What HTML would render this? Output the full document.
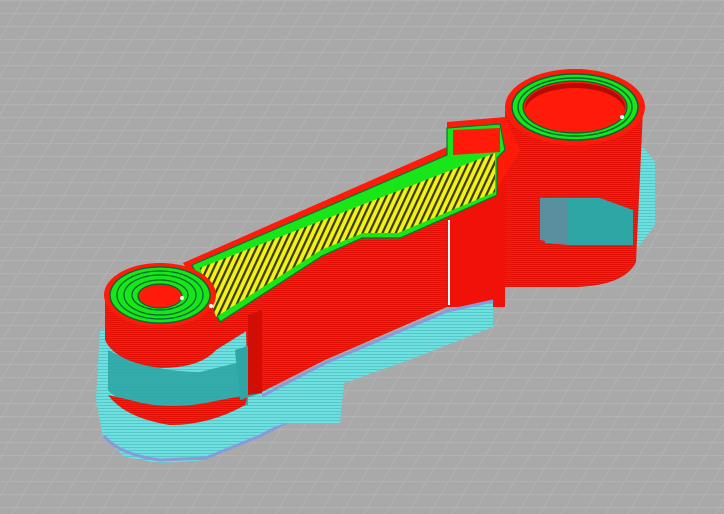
<!DOCTYPE html>
<html><head><meta charset="utf-8"><style>
html,body{margin:0;padding:0;background:#a8a8a8;width:724px;height:514px;overflow:hidden}
</style></head><body>
<svg width="724" height="514" viewBox="0 0 724 514" xmlns="http://www.w3.org/2000/svg">
<defs>
<pattern id="grid" width="22" height="13" patternUnits="userSpaceOnUse" patternTransform="skewX(-30)">
<rect width="22" height="13" fill="#a9a9a9"/>
<path d="M0 0.5H22M0.5 0V13" stroke="#b3b3b3" stroke-width="1"/>
</pattern>
<pattern id="yel" width="6" height="6" patternUnits="userSpaceOnUse" patternTransform="rotate(25)">
<rect width="6" height="6" fill="#f2f21a"/>
<rect width="2.2" height="6" fill="#3a3a00"/>
</pattern>
<pattern id="cy" width="4" height="3" patternUnits="userSpaceOnUse">
<rect width="4" height="3" fill="#6fe0e0"/>
<rect width="4" height="1" fill="#56c6c8"/>
</pattern>
<pattern id="rd" width="4" height="2" patternUnits="userSpaceOnUse">
<rect width="4" height="2" fill="#ff1a0a"/>
<rect width="4" height="0.7" fill="#d80c04"/>
</pattern>
</defs>
<rect width="724" height="514" fill="url(#grid)"/>

<!-- cyan base left -->
<path d="M100 330 L96 400 L103 437 L125 457 L160 463 L206 460 L260 437 L287 423 L290 395 L262 380 L248 330 L200 318 Z" fill="url(#cy)"/>
<path d="M104 436 Q120 455 160 460 L206 458 L260 436 L287 422" fill="none" stroke="#8a9ad8" stroke-width="3"/>
<!-- dark teal band left -->
<path d="M108 350 Q150 372 200 372 L248 360 L248 405 Q200 418 150 410 Q115 400 108 390 Z" fill="#2fa6a6" opacity="0.9"/>
<!-- cyan right -->
<path d="M610 140 L640 143 L655 162 L655 225 L640 245 L625 255 L545 250 L540 195 L600 185 Z" fill="url(#cy)"/>
<path d="M540 196 Q600 185 640 170" fill="none" stroke="#8a9ad8" stroke-width="3"/>

<!-- red right cylinder side -->
<path d="M505 110 L505 287 L577 287 Q625 285 636 262 L643 110 Z" fill="url(#rd)"/>
<path d="M540 198 L600 198 L633 210 L633 245 L570 245 L545 243 Z" fill="#2fa6a6"/>
<path d="M540 198 L568 200 L568 245 L540 240 Z" fill="#5a8fa0"/>
<!-- red main mid face -->
<path d="M245 300 L447 147 L447 307 L325 360 L260 393 L248 395 Z" fill="url(#rd)"/>
<path d="M447 147 L505 130 L505 307 L447 307 Z" fill="#f01208"/>
<!-- cyan ledge under mid -->
<path d="M262 395 L325 362 L447 310 L493 300 L493 327 L409 360 L344 383 L340 423 L287 423 L262 430 Z" fill="url(#cy)"/>
<path d="M262 396 L325 363 L447 311 L493 301" fill="none" stroke="#8a9ad8" stroke-width="3"/>
<!-- left cylinder side -->
<path d="M105 295 L105 340 Q115 362 160 368 Q200 368 216 350 L248 330 L248 300 L216 295 Z" fill="url(#rd)"/>
<path d="M108 395 Q125 418 170 425 Q210 425 245 405 L248 395 L220 400 Q170 412 130 400 Z" fill="url(#rd)"/>
<path d="M235 350 L260 342 L262 393 L240 400 Z" fill="#2fa6a6"/>
<path d="M248 315 L262 310 L262 393 L248 395 Z" fill="#d00e04"/>

<!-- top surface -->
<path d="M183 263 L447 147 L447 122 L505 117 L520 150 L495 192 L398 233 L363 233 L321 252 L216 317 Z" fill="#ff1a0a"/>
<path d="M192 265 L447 155 L447 128 L500 124 L505 150 L497 158 L497 195 L400 238 L362 238 L322 256 L220 322 Z" fill="#19e619" stroke="#073" stroke-width="1.2"/>
<path d="M200 268 L495 153 L495 192 L398 233 L363 233 L321 250 L216 317 Z" fill="url(#yel)"/>
<path d="M453 130 L500 128 L500 152 L453 155 Z" fill="#ff1a0a"/>
<!-- right cylinder top -->
<ellipse cx="575" cy="107" rx="70" ry="38" fill="#ff1a0a"/>
<ellipse cx="575" cy="107" rx="63" ry="33" fill="#19e619" stroke="#063" stroke-width="1.5"/>
<ellipse cx="575" cy="107" rx="57" ry="29" fill="none" stroke="#063" stroke-width="1.5"/>
<ellipse cx="575" cy="107" rx="52" ry="26" fill="#ff1a0a" stroke="#063" stroke-width="1.2"/>
<path d="M525 107 A50 24 0 0 1 625 107 L625 112 A50 24 0 0 0 525 112Z" fill="#b80a04"/>
<!-- left cylinder top -->
<ellipse cx="160" cy="295" rx="56" ry="32" fill="#ff1a0a"/>
<ellipse cx="160" cy="295" rx="50" ry="28" fill="#19e619" stroke="#063" stroke-width="1.3"/>
<ellipse cx="160" cy="295" rx="43" ry="24" fill="none" stroke="#063" stroke-width="1.3"/>
<ellipse cx="160" cy="295" rx="36" ry="20" fill="none" stroke="#063" stroke-width="1.3"/>
<ellipse cx="160" cy="295" rx="28" ry="15" fill="none" stroke="#063" stroke-width="1.3"/>
<ellipse cx="160" cy="296" rx="22" ry="12" fill="#ff1a0a" stroke="#063" stroke-width="1.2"/>
<line x1="449" y1="220" x2="449" y2="305" stroke="#fff" stroke-width="2"/>
<circle cx="182" cy="298" r="2" fill="#fff"/>
<circle cx="211" cy="306" r="2" fill="#fff"/>
<circle cx="622" cy="117" r="2" fill="#fff"/>
</svg>
</body></html>
